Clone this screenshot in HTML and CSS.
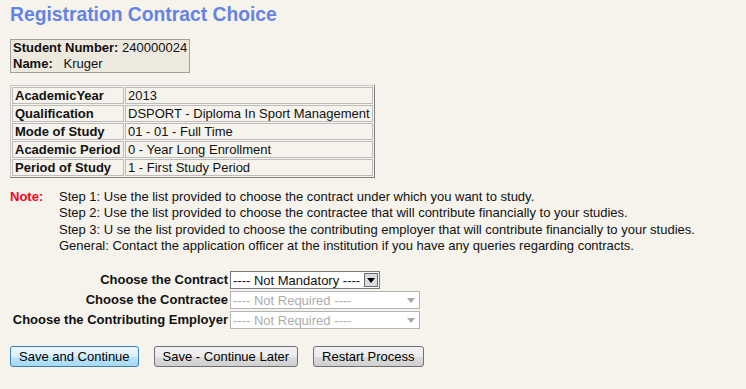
FILE: index.html
```html
<!DOCTYPE html>
<html lang="en">
<head>
    <meta charset="UTF-8">
    <meta name="viewport" content="width=device-width, initial-scale=1.0">
    <title>Registration Contract Choice</title>
    <link rel="stylesheet" href="styles.css">
</head>
<body>

    <h1 class="title">Registration Contract Choice</h1>

    <table class="student">
        <tr><td><b>Student Number:</b> 240000024</td></tr>
        <tr><td><b>Name:</b>&nbsp;&nbsp;&nbsp;Kruger</td></tr>
    </table>

    <table class="info">
        <tr><th>AcademicYear</th><td>2013</td></tr>
        <tr><th>Qualification</th><td>DSPORT - Diploma In Sport Management</td></tr>
        <tr><th>Mode of Study</th><td>01 - 01 - Full Time</td></tr>
        <tr><th>Academic Period</th><td>0 - Year Long Enrollment</td></tr>
        <tr><th>Period of Study</th><td>1 - First Study Period</td></tr>
    </table>

    <div class="note">
        <span class="note-label">Note:</span>
        <div class="note-text">
            <p>Step 1: Use the list provided to choose the contract under which you want to study.</p>
            <p>Step 2: Use the list provided to choose the contractee that will contribute financially to your studies.</p>
            <p>Step 3: U se the list provided to choose the contributing employer that will contribute financially to your studies.</p>
            <p>General: Contact the application officer at the institution if you have any queries regarding contracts.</p>
        </div>
    </div>

    <table class="choices">
        <tr>
            <th>Choose the Contract</th>
            <td>
                <span class="dropdown">
                    <select><option>---- Not Mandatory ----</option></select>
                    <span class="arrow">
                        <svg width="8" height="5" viewBox="0 0 8 5"><path d="M0 0h8L4 5z" fill="#000"/></svg>
                    </span>
                </span>
            </td>
        </tr>
        <tr>
            <th>Choose the Contractee</th>
            <td>
                <span class="dropdown disabled">
                    <select disabled><option>---- Not Required ----</option></select>
                    <span class="arrow">
                        <svg width="8" height="5" viewBox="0 0 8 5"><path d="M0 0h8L4 5z" fill="#a8a8a8"/></svg>
                    </span>
                </span>
            </td>
        </tr>
        <tr>
            <th>Choose the Contributing Employer</th>
            <td>
                <span class="dropdown disabled">
                    <select disabled><option>---- Not Required ----</option></select>
                    <span class="arrow">
                        <svg width="8" height="5" viewBox="0 0 8 5"><path d="M0 0h8L4 5z" fill="#a8a8a8"/></svg>
                    </span>
                </span>
            </td>
        </tr>
    </table>

    <div class="buttons">
        <button class="primary">Save and Continue</button>
        <button>Save - Continue Later</button>
        <button>Restart Process</button>
    </div>

</body>
</html>
```

FILE: styles.css
```css
body {
    font-family: "Liberation Sans", Arial, sans-serif;
    font-size: 13px;
    color: #111;
    background-color: #f5f3ec;
    margin: 0;
    padding: 4px 10px;
}
.title {
    font-size: 19.3px;
    font-weight: bold;
    color: #6483e3;
    margin: 0 0 13px 0;
    line-height: 22px;
}
.student {
    border: 1px solid #a0a0a0;
    border-spacing: 0;
    background-color: #ede9df;
    margin-bottom: 12px;
}
.student td {
    padding: 0 2px;
    line-height: 16px;
}
.info {
    border: 1px solid;
    border-color: #c8c8c8 #808080 #808080 #c8c8c8;
    border-spacing: 1px;
    margin-bottom: 11px;
}
.info th,
.info td {
    border: 1px solid #bcbcbc;
    padding: 0 2px;
    line-height: 15px;
    text-align: left;
}
.info th {
    width: 106px;
}
.note {
    display: flex;
    margin-bottom: 15px;
}
.note-label {
    color: #ff0022;
    font-weight: bold;
    width: 49px;
    flex-shrink: 0;
}
.note-text p {
    margin: 0;
    line-height: 16.4px;
}
.choices {
    border-spacing: 0;
    margin-bottom: 16px;
}
.choices th {
    text-align: right;
    padding: 0 2px 0 0;
    width: 218px;
    white-space: nowrap;
}
.choices td {
    padding: 1px 0 0 0;
    height: 19px;
}
.dropdown {
    display: inline-flex;
    align-items: center;
    height: 18px;
    border: 1px solid #7a7a7a;
    background: #fff;
    box-sizing: border-box;
    width: 150px;
}
.dropdown select {
    appearance: none;
    -webkit-appearance: none;
    border: none;
    background: transparent;
    font-family: "Liberation Sans", Arial, sans-serif;
    font-size: 13px;
    color: #111;
    padding: 0 0 0 2px;
    margin: 0;
    flex: 1;
    height: 16px;
    outline: none;
}
.dropdown .arrow {
    width: 14px;
    height: 14px;
    margin-right: 1px;
    box-sizing: border-box;
    border: 1px solid #6a6a6a;
    background: #dcdcdc;
    display: flex;
    align-items: center;
    justify-content: center;
}
.dropdown.disabled {
    width: 190px;
    border-color: #b4b4b4;
}
.dropdown.disabled select {
    color: #8a8a8a;
}
.dropdown.disabled .arrow {
    border: none;
    background: transparent;
}
.buttons {
    display: flex;
    gap: 15px;
}
.buttons button {
    font-family: "Liberation Sans", Arial, sans-serif;
    font-size: 13px;
    color: #000;
    height: 21px;
    padding: 0 8px;
    border: 1px solid #707070;
    border-radius: 3px;
    background: linear-gradient(#f2f2f2, #ebebeb 50%, #dddddd 51%, #cfcfcf);
}
.buttons button.primary {
    border-color: #3c7fb1;
    background: linear-gradient(#eaf6fd, #d9f0fc 50%, #bee6fd 51%, #a7d9f5);
}
```
